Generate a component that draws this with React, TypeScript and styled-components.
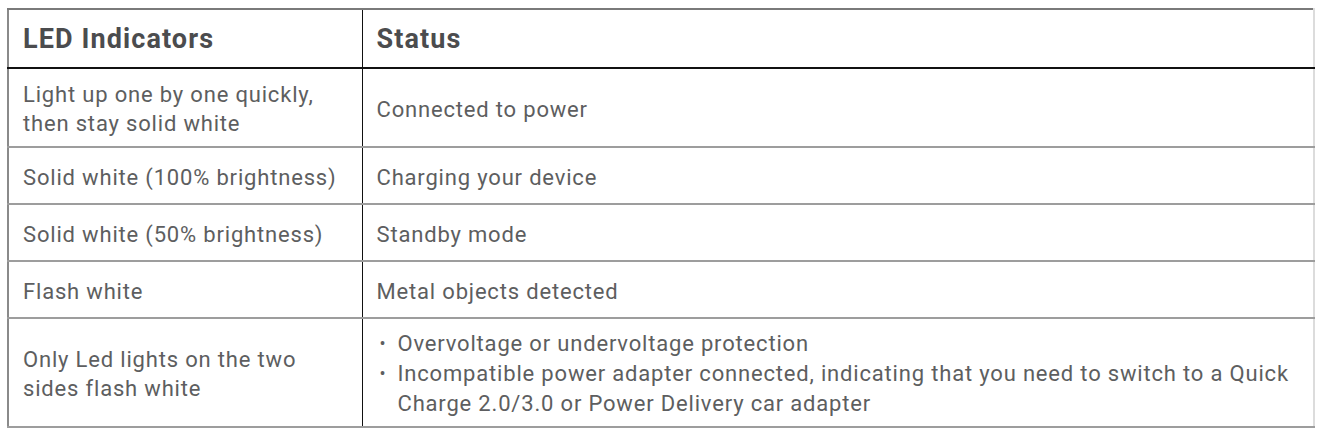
import styled, { createGlobalStyle } from "styled-components";

const GlobalStyle = createGlobalStyle`
    body {
        margin: 0;
        background: #fff;
        font-family: Roboto, "Liberation Sans", sans-serif;
    }
`;

const Page = styled.div`
    padding: 8px 0 0 7px;
`;

const Table = styled.table`
    width: 1308px;
    border-collapse: collapse;
    table-layout: fixed;
    border-top: 2px solid #7a7a7a;
    border-left: 2px solid #8a8a8a;
    border-right: 2px solid #dcdcdc;
    border-bottom: 2px solid #8c8c8c;
`;

const Row = styled.tr<{ $h: number }>`
    height: ${(p) => p.$h}px;
    border-bottom: 2px solid #9d9d9d;
`;

const HeadRow = styled.tr`
    height: 59px;
    border-bottom: 2px solid #111;
`;

const HeadCell = styled.th<{ $w?: number }>`
    box-sizing: border-box;
    width: ${(p) => (p.$w ? `${p.$w}px` : "auto")};
    padding: 0 14px;
    text-align: left;
    vertical-align: middle;
    color: #4b4c4e;
    font-size: 27px;
    font-weight: 700;
    letter-spacing: 1.1px;
    & + & {
        border-left: 1px solid #111;
    }
`;

const Cell = styled.td`
    padding: 3px 14px 0;
    vertical-align: middle;
    color: #5d5e60;
    font-size: 22px;
    letter-spacing: 0.82px;
    line-height: 29px;
    & + & {
        border-left: 1px solid #111;
    }
`;

const Bullets = styled.ul`
    margin: 0;
    padding: 0;
    list-style: none;
    line-height: 30px;
`;

const Bullet = styled.li`
    position: relative;
    padding-left: 21px;
    &::before {
        content: "•";
        position: absolute;
        left: 3px;
        top: 0;
        font-size: 18px;
    }
`;

const rows = [
    { led: ["Light up one by one quickly,", "then stay solid white"], status: "Connected to power", h: 79 },
    { led: ["Solid white (100% brightness)"], status: "Charging your device", h: 57 },
    { led: ["Solid white (50% brightness)"], status: "Standby mode", h: 57 },
    { led: ["Flash white"], status: "Metal objects detected", h: 57 },
];

const App = () => {
    return (
        <Page>
            <GlobalStyle />
            <Table>
                <thead>
                    <HeadRow>
                        <HeadCell $w={354}>LED Indicators</HeadCell>
                        <HeadCell>Status</HeadCell>
                    </HeadRow>
                </thead>
                <tbody>
                    {rows.map((r) => (
                        <Row $h={r.h} key={r.status}>
                            <Cell>
                                {r.led.map((l, i) => (
                                    <div key={i}>{l}</div>
                                ))}
                            </Cell>
                            <Cell>{r.status}</Cell>
                        </Row>
                    ))}
                    <Row $h={109}>
                        <Cell>
                            <div>Only Led lights on the two</div>
                            <div>sides flash white</div>
                        </Cell>
                        <Cell>
                            <Bullets>
                                <Bullet>Overvoltage or undervoltage protection</Bullet>
                                <Bullet>
                                    Incompatible power adapter connected, indicating that you need to switch to a Quick
                                    <br />
                                    Charge 2.0/3.0 or Power Delivery car adapter
                                </Bullet>
                            </Bullets>
                        </Cell>
                    </Row>
                </tbody>
            </Table>
        </Page>
    );
};

export default App;
